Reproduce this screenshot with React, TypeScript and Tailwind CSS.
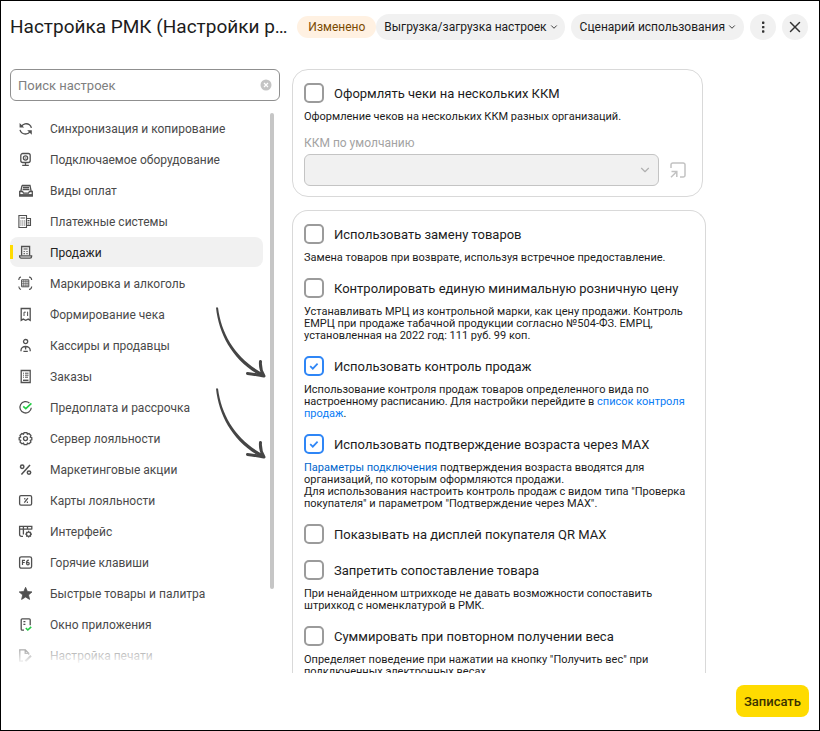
import { useState } from 'react';
import type { ReactNode } from 'react';
import { ChevronDown, X } from 'lucide-react';

const GREEN = '#22cc44';

const ICONS: Record<string, ReactNode> = {
  sync: (
    <>
      <path d="M3.6 6.2C5 4 8.6 2.8 11.4 4.8c1 .7 1.7 1.6 2 3" />
      <path d="M11.9 11.8c-1.6 2.2-5.2 3-7.8 1.2-1.1-.8-1.8-1.8-2.1-3.2" />
      <path d="M1.6 3v4.6h4.6zM13.8 14.8v-4.6H9.2z" fill="currentColor" stroke="none" />
    </>
  ),
  device: (
    <>
      <rect x="2.8" y="2.5" width="9.4" height="9" rx="2" />
      <circle cx="7.5" cy="7" r="2.1" />
      <path d="M7.5 6.6v.8M7.5 11.5v2.5M4.2 14.3h6.6" />
    </>
  ),
  cashbox: (
    <>
      <path d="M4 3.5h8l1.2 6M4 3.5L2.8 9.5M5 5.5h6M4.6 7.5h6.8" />
      <path d="M1.7 9.5h2.8l1 1.6h5l1-1.6h2.8v4.6H1.7z" />
      <path d="M1.7 13h12.6" strokeWidth="1.8" />
    </>
  ),
  terminal: (
    <>
      <path d="M.9 2.5h7.6v12H.9zM8.5 5.5h4v7h-4" strokeWidth="1.1" />
      <path
        d="M2.5 5h4.6M2.4 8h1M4.3 8h1M6.2 8h1M2.4 10h1M4.3 10h1M6.2 10h1M2.4 12h1M4.3 12h1M6.2 12h1M9.5 7.5h2M9.5 9.2h2M9.5 11h2"
        strokeWidth="1"
      />
    </>
  ),
  sales: (
    <>
      <path d="M3.6 11.5v-9h8v9" />
      <path d="M1.6 11.8h12v.7a1.6 1.6 0 0 1-1.6 1.6H3.2a1.6 1.6 0 0 1-1.6-1.6z" />
      <path d="M5.6 5h4M5.6 7.5h1.2M8.4 7.5h1.2M5.6 9.6h1.2M8.4 9.6h1.2" strokeWidth="1.1" />
    </>
  ),
  marking: (
    <>
      <path d="M3 2C1.5 2.2.8 3.2.8 5M11 2c1.7.2 2.6 1.2 2.7 3M.8 11.5c.1 1.8 1 2.7 2.2 3M11 14.5c1.5-.2 2.6-1.2 2.7-3" strokeWidth="1.1" />
      <path d="M3.6 4.8h7.2v7H3.6z" strokeWidth="1" />
      <path d="M3.6 6.6h7.2M3.6 8.4h7.2M3.6 10.2h7.2M5.4 4.8v7M7.2 4.8v7M9 4.8v7" strokeWidth=".6" />
    </>
  ),
  receipt: (
    <>
      <path d="M3.2 2.5h9v11.8l-2-1.2-2.5 1.2-2.5-1.2-2 1.2z" />
      <path d="M6 10V6.2M6 6.2h1.8M9 6.2h1M9.6 6.2V10" strokeWidth="1" />
    </>
  ),
  person: (
    <>
      <circle cx="7.6" cy="4.6" r="2.1" />
      <path d="M3 14.3v-1c0-2.2 2-3.8 4.6-3.8s4.6 1.6 4.6 3.8v1M5.4 14.3h4.4M7.6 9.5v3" />
    </>
  ),
  orders: (
    <>
      <path d="M3.2 2.5h9v12h-9z" />
      <path d="M5 5.2h1M7 5.2h3.5M5 7.2h1M7 7.2h3.5M5 9.2h1M7 9.2h3" strokeWidth="1" />
      <path d="M5 12.3h5.5" strokeWidth="1.4" />
    </>
  ),
  prepay: (
    <>
      <path d="M11.4 4A5.7 5.7 0 1 0 13.3 8.8" />
      <path d="M5.2 7.4l2.6 2.2 5.6-5.2" stroke={GREEN} strokeWidth="1.6" />
    </>
  ),
  gear: (
    <>
      <path d="M6.1 2.7h2.8l.5 1.5 1.6-.6 1.9 1.9-.6 1.6 1.5.5v2.2l-1.5.6.6 1.6-1.9 1.8-1.6-.6-.5 1.4H6.1l-.6-1.4-1.6.6L2 12l.7-1.6-1.5-.6V7.6l1.5-.5L2 5.5l1.9-1.9 1.6.6z" />
      <circle cx="7.5" cy="8.6" r="2" />
    </>
  ),
  percent: (
    <>
      <circle cx="4.2" cy="5.8" r="1.7" strokeWidth="1.5" />
      <circle cx="11" cy="11.6" r="1.7" strokeWidth="1.5" />
      <path d="M12 4L3.4 13.4" strokeWidth="1.5" />
    </>
  ),
  card: (
    <>
      <rect x="1.6" y="3.6" width="12" height="9.6" rx="1.4" />
      <path d="M9.9 6.2l-3.6 4.4" />
      <path d="M6.2 6.8h1.2M8.8 10.2H10" strokeWidth="1.5" />
    </>
  ),
  ui: (
    <>
      <path d="M5 13.4H3.4a1.8 1.8 0 0 1-1.8-1.8V3.4h12.2v3.2M1.6 6.2h12.2M5.4 3.4v8M9.5 3.4v3" />
      <circle cx="10.6" cy="11.2" r="2.1" />
      <path d="M10.6 7.8v1.3M10.6 13.3v1.3M7.2 11.2h1.3M12.7 11.2H14M8.3 8.9l.8.8M12.1 12.7l.8.8M12.9 8.9l-.8.8M9.1 12.7l-.8.8" />
    </>
  ),
  hotkeys: (
    <>
      <rect x="1.6" y="2.8" width="12" height="11.4" rx="1.8" />
      <path d="M4.5 10.9V6.3h2.5M4.5 8.5h2.2M10.8 6.2c-1.7.2-2.4 1.6-2.3 3.2" strokeWidth="1.2" />
      <circle cx="9.9" cy="9.6" r="1.3" strokeWidth="1.2" />
    </>
  ),
  star: (
    <path
      d="M7.6 2.3l1.8 4.2 4.6.4-3.5 3 1.1 4.5-4-2.4-4 2.4 1.1-4.5-3.5-3 4.6-.4z"
      fill="currentColor"
      strokeWidth=".8"
    />
  ),
  window: (
    <>
      <path d="M6 14.2H4.2a1 1 0 0 1-1-1V3.8a1 1 0 0 1 1-1h7a1 1 0 0 1 1 1v5.5M5.4 5.6h2M5.4 8.4h2" />
      <path d="M7.8 12l2 2 3.4-3.2" stroke={GREEN} strokeWidth="1.6" />
    </>
  ),
  print: (
    <>
      <path d="M5 14.2H1.8V2.8h5.5l3.4 3.4v1.5M7.2 2.8v3.6h3.4" />
      <path d="M7.4 14.2l5.6-5.4" strokeWidth="2" />
    </>
  ),
};

const MENU = [
  { icon: 'sync', label: 'Синхронизация и копирование' },
  { icon: 'device', label: 'Подключаемое оборудование' },
  { icon: 'cashbox', label: 'Виды оплат' },
  { icon: 'terminal', label: 'Платежные системы' },
  { icon: 'sales', label: 'Продажи' },
  { icon: 'marking', label: 'Маркировка и алкоголь' },
  { icon: 'receipt', label: 'Формирование чека' },
  { icon: 'person', label: 'Кассиры и продавцы' },
  { icon: 'orders', label: 'Заказы' },
  { icon: 'prepay', label: 'Предоплата и рассрочка' },
  { icon: 'gear', label: 'Сервер лояльности' },
  { icon: 'percent', label: 'Маркетинговые акции' },
  { icon: 'card', label: 'Карты лояльности' },
  { icon: 'ui', label: 'Интерфейс' },
  { icon: 'hotkeys', label: 'Горячие клавиши' },
  { icon: 'star', label: 'Быстрые товары и палитра' },
  { icon: 'window', label: 'Окно приложения' },
  { icon: 'print', label: 'Настройка печати' },
];

function MenuIcon({ name }: { name: string }) {
  return (
    <svg
      viewBox="0 0 16 16"
      className="size-4 flex-shrink-0 text-[#505050]"
      fill="none"
      stroke="currentColor"
      strokeWidth="1.3"
      aria-hidden="true"
    >
      {ICONS[name]}
    </svg>
  );
}

function Option({
  id,
  label,
  checked = false,
  children,
}: {
  id: string;
  label: string;
  checked?: boolean;
  children?: ReactNode;
}) {
  const [on, setOn] = useState(checked);
  return (
    <div>
      <div className="flex items-start gap-2.5">
        <span className="relative flex size-5 flex-shrink-0">
          <input
            id={id}
            type="checkbox"
            checked={on}
            onChange={(e) => setOn(e.target.checked)}
            className="size-5 appearance-none rounded-[5px] border-2 border-[#9b9b9b] bg-white checked:border-[#2f86f6]"
          />
          {on && (
            <svg
              viewBox="0 0 20 20"
              className="pointer-events-none absolute inset-0 size-5"
              fill="none"
              stroke="#2f86f6"
              strokeWidth="1.7"
            >
              <path d="M6.2 10.2l2.6 2.5 4.8-5" />
            </svg>
          )}
        </span>
        <label htmlFor={id} className="text-[13px] leading-[22px]">
          {label}
        </label>
      </div>
      {children && <p className="mt-1.5 text-[11px] leading-3">{children}</p>}
    </div>
  );
}

function Arrow() {
  return (
    <svg viewBox="0 0 54 76" className="h-[76px] w-[54px]" aria-hidden="true">
      <path d="M2 3.5C5 32 20 58 48.5 73L50.5 70C24 57 7.5 32 4 3.5z" fill="#454545" />
      <path
        d="M46.5 57.5C46 63 47.5 68 50 72C44 71 39 70 33.5 69.5"
        fill="none"
        stroke="#454545"
        strokeWidth="3"
        strokeLinecap="round"
        strokeLinejoin="round"
      />
    </svg>
  );
}

export default function App() {
  const [active, setActive] = useState('Продажи');

  return (
    <div className="relative flex h-screen flex-col overflow-hidden border border-black bg-white font-['Roboto','Noto_Sans',sans-serif] text-[#1c1c1c]">
      <header className="flex items-center gap-1.5 pt-[13px] pr-[11px] pl-[9px]">
        <h1 className="min-w-0 flex-1 truncate text-[19px] leading-[26px]">
          Настройка РМК (Настройки рабочего места)
        </h1>
        <div className="flex flex-shrink-0 items-center text-xs">
          <span className="rounded-full bg-[#fff1e2] px-[11px] leading-[22px] text-[#7a4a00]">Изменено</span>
          <button type="button" className="flex h-[26px] items-center rounded-full bg-[#f1f1f1] pr-1.5 pl-2">
            Выгрузка/загрузка настроек
            <ChevronDown size={10} className="ml-0.5" />
          </button>
        </div>
        <button type="button" className="flex h-[26px] flex-shrink-0 items-center rounded-full bg-[#f1f1f1] pr-[7px] pl-[9px] text-xs">
          Сценарий использования
          <ChevronDown size={10} className="ml-0.5" />
        </button>
        <button type="button" aria-label="Ещё" className="flex size-[26px] flex-shrink-0 items-center justify-center rounded-full bg-[#f1f1f1]">
          <svg viewBox="0 0 16 16" className="size-4" fill="#333">
            <rect x="7" y="2.5" width="2.4" height="2.4" rx=".6" />
            <rect x="7" y="6.9" width="2.4" height="2.4" rx=".6" />
            <rect x="7" y="11.3" width="2.4" height="2.4" rx=".6" />
          </svg>
        </button>
        <button type="button" aria-label="Закрыть" className="flex size-[26px] flex-shrink-0 items-center justify-center rounded-full bg-[#f1f1f1] text-[#333]">
          <X size={18} strokeWidth={2} />
        </button>
      </header>

      <div className="mt-[29px] flex min-h-0 flex-1 gap-3 px-[9px]">
        <aside className="relative flex w-[270px] flex-shrink-0 flex-col">
          <div className="flex h-8 flex-shrink-0 items-center rounded-md border border-[#8f8f8f] px-[7px]">
            <input
              type="text"
              aria-label="Поиск настроек"
              placeholder="Поиск настроек"
              className="min-w-0 flex-1 pt-0.5 text-[13px] outline-none placeholder:text-[#808080]"
            />
            <button type="button" aria-label="Очистить">
              <svg viewBox="0 0 12 12" className="size-3">
                <circle cx="6" cy="6" r="5.5" fill="#c4c4c4" />
                <path d="M4 4l4 4M8 4l-4 4" stroke="#fff" strokeWidth="1.2" />
              </svg>
            </button>
          </div>
          <div className="mt-3 flex min-h-0 flex-1 gap-[7px] pr-1.5">
            <nav className="flex flex-1 flex-col gap-px overflow-hidden text-xs text-[#4a4a4a]">
              {MENU.map((item) => {
                const isActive = item.label === active;
                return (
                  <button
                    key={item.label}
                    type="button"
                    onClick={() => setActive(item.label)}
                    className={`flex h-[30px] flex-shrink-0 items-center rounded-lg text-left ${
                      isActive ? 'bg-[#f1f1f1] text-[#222]' : ''
                    }`}
                  >
                    <span className={`mr-[5px] h-3.5 w-[3px] ${isActive ? 'bg-[#ffdb00]' : ''}`} />
                    <MenuIcon name={item.icon} />
                    <span className="ml-4 pt-px">{item.label}</span>
                  </button>
                );
              })}
            </nav>
            <div className="h-[85%] w-1 rounded-full bg-[#c6c6c6]" />
          </div>
          {/* затухание списка у нижнего края */}
          <div className="pointer-events-none absolute bottom-0 left-0 h-10 w-[253px] bg-linear-to-b from-white/0 to-white to-80%" />
        </aside>

        <main className="flex min-w-0 flex-1 flex-col gap-[13px] overflow-hidden">
          <section className="max-w-[411px] flex-shrink-0 rounded-2xl border border-[#d9d9d9] px-[11px] pt-[13px] pb-[10px]">
            <Option id="multi-kkm" label="Оформлять чеки на нескольких ККМ">
              Оформление чеков на нескольких ККМ разных организаций.
            </Option>
            <label htmlFor="default-kkm" className="mt-3 block text-xs leading-4 text-[#a3a3a3]">
              ККМ по умолчанию
            </label>
            <div className="mt-[3px] flex items-center">
              <div className="relative w-[355px]">
                <select
                  id="default-kkm"
                  disabled
                  className="block h-8 w-full appearance-none rounded-md border border-[#c4c4c4] bg-[#f1f1f1]"
                />
                <ChevronDown size={14} className="pointer-events-none absolute top-[9px] right-[7px] text-[#b0b0b0]" />
              </div>
              <button type="button" disabled aria-label="Открыть" className="ml-[11px] text-[#c2c2c2]">
                <svg viewBox="0 0 16 16" className="size-4" fill="none" stroke="currentColor" strokeWidth="1.5">
                  <path d="M1 6V2.8A1.8 1.8 0 0 1 2.8 1h10.4A1.8 1.8 0 0 1 15 2.8v10.4a1.8 1.8 0 0 1-1.8 1.8H10" />
                  <path d="M1.5 9.5h5.3V15M6.6 9.8L1 15.2" />
                </svg>
              </button>
            </div>
          </section>

          <section className="flex max-w-[414px] flex-shrink-0 flex-col gap-3.5 rounded-t-2xl border border-b-0 border-[#d9d9d9] px-[11px] pt-[13px]">
            <Option id="replace" label="Использовать замену товаров">
              Замена товаров при возврате, используя встречное предоставление.
            </Option>
            <Option id="min-price" label="Контролировать единую минимальную розничную цену">
              Устанавливать МРЦ из контрольной марки, как цену продажи. Контроль ЕМРЦ при продаже табачной
              продукции согласно №504-ФЗ. ЕМРЦ, установленная на 2022 год: 111 руб. 99 коп.
            </Option>
            <Option id="sales-control" label="Использовать контроль продаж" checked>
              Использование контроля продаж товаров определенного вида по настроенному расписанию. Для
              настройки перейдите в{' '}
              <a href="#control" className="text-[#0a7cf5]">
                список контроля продаж
              </a>
              .
            </Option>
            <Option id="age-max" label="Использовать подтверждение возраста через MAX" checked>
              <a href="#params" className="text-[#0066cc]">
                Параметры подключения
              </a>{' '}
              подтверждения возраста вводятся для организаций, по которым оформляются продажи.
              <br />
              Для использования настроить контроль продаж с видом типа "Проверка покупателя" и параметром
              "Подтверждение через MAX".
            </Option>
            <Option id="qr-max" label="Показывать на дисплей покупателя QR MAX" />
            <Option id="no-match" label="Запретить сопоставление товара">
              При ненайденном штрихкоде не давать возможности сопоставить штрихкод с номенклатурой в РМК.
            </Option>
            <Option id="sum-weight" label="Суммировать при повторном получении веса">
              Определяет поведение при нажатии на кнопку "Получить вес" при подключенных электронных весах.
            </Option>
          </section>
        </main>
      </div>

      <footer className="flex justify-end px-[10px] pt-3 pb-[13px]">
        <button type="button" className="h-8 rounded-lg bg-[#ffdb00] px-2 pt-px text-[13px] font-medium text-[#3b3200]">
          Записать
        </button>
      </footer>

      {/* стрелки-указатели поверх списка */}
      <div className="pointer-events-none absolute top-[303px] left-[213px] flex flex-col gap-[5px]">
        <Arrow />
        <Arrow />
      </div>
    </div>
  );
}
